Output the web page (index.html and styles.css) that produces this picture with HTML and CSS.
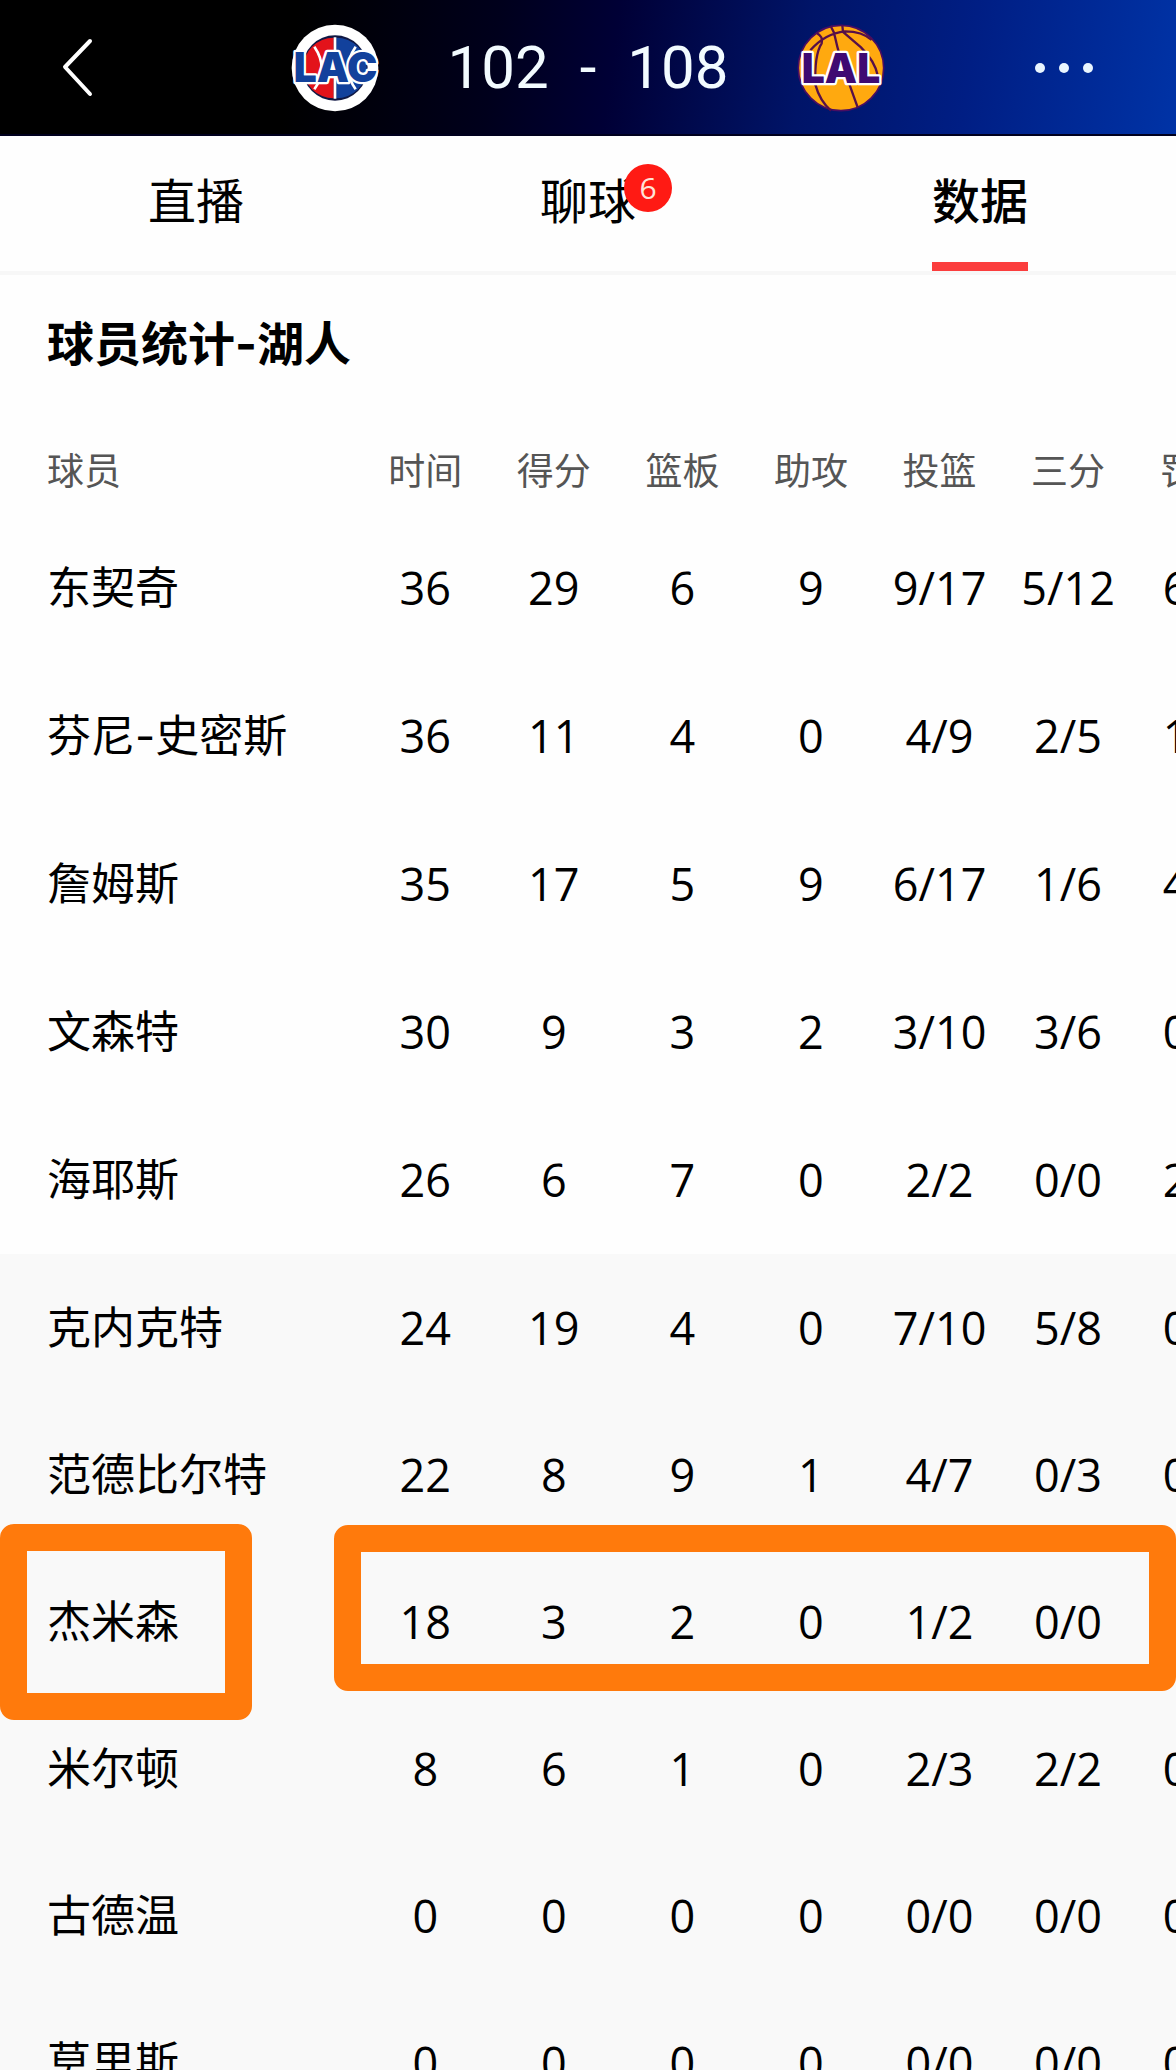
FILE: index.html
```html
<!DOCTYPE html>
<html lang="zh-CN">
<head>
<meta charset="utf-8">
<meta name="viewport" content="width=device-width, initial-scale=1">
<title>LAC 102 - 108 LAL</title>
<link rel="stylesheet" href="styles.css">
</head>
<body>
<div class="app">
  <header class="topbar">
    <button class="icon-button back" type="button" aria-label="返回">
      <svg width="32" height="60" viewBox="0 0 32 60" fill="none" stroke="#fff" stroke-width="4" stroke-linecap="round" stroke-linejoin="round"><path d="M28 3 3 29 28 56"/></svg>
    </button>
    <div class="matchup">
      <svg class="logo" viewBox="36 25 264 270" role="img" aria-label="LAC">
        <circle cx="165" cy="160" r="130" fill="#fff"/>
        <circle cx="165" cy="160" r="98" fill="#101844"/>
        <path d="M161 69a91 91 0 0 0 0 182z" fill="#e3131b"/>
        <path d="M169 69a91 91 0 0 1 0 182z" fill="#12419c"/>
        <path d="M165 68V252M103 96Q147 160 103 224M227 96Q183 160 227 224" fill="none" stroke="#fff" stroke-width="8"/>
        <text class="logo-text logo-clippers" x="167" y="203" text-anchor="middle">LAC</text>
      </svg>
      <div class="score"><span>102</span><span>-</span><span>108</span></div>
      <svg class="logo" viewBox="36 25 264 270" role="img" aria-label="LAL">
        <circle cx="168" cy="160" r="128" fill="#ffa90f" stroke="#4a0d62" stroke-width="5"/>
        <path d="M76 107Q120 56 180 50 232 50 260 76M96 56Q115 66 110 86 88 120 91 210M91 210Q105 260 138 288M137 34 147 54Q166 140 190 200L218 278M172 32 174 52 228 98Q270 140 278 182" fill="none" stroke="#571048" stroke-width="7"/>
        <text class="logo-text logo-lakers" x="168" y="204" text-anchor="middle">LAL</text>
      </svg>
    </div>
    <button class="icon-button more" type="button" aria-label="更多">
      <svg width="60" height="12" viewBox="0 0 60 12" fill="#eaf6ff"><circle cx="6" cy="6" r="5"/><circle cx="30" cy="6" r="5"/><circle cx="54" cy="6" r="5"/></svg>
    </button>
  </header>

  <nav class="tabs">
    <a class="tab" href="#live"><span class="tab-label">直播</span></a>
    <a class="tab" href="#chat"><span class="tab-label">聊球<span class="badge">6</span></span></a>
    <a class="tab active" href="#stats" aria-current="page"><span class="tab-label">数据</span></a>
  </nav>

  <main class="stats" id="stats">
    <h1 class="title">球员统计-湖人</h1>
    <table class="players">
      <colgroup><col class="name-col"><col span="7"></colgroup>
      <thead>
        <tr><th scope="col">球员</th><th scope="col">时间</th><th scope="col">得分</th><th scope="col">篮板</th><th scope="col">助攻</th><th scope="col">投篮</th><th scope="col">三分</th><th scope="col">罚球</th></tr>
      </thead>
      <tbody class="starters">
        <tr><th scope="row">东契奇</th><td>36</td><td>29</td><td>6</td><td>9</td><td>9/17</td><td>5/12</td><td>6/9</td></tr>
        <tr><th scope="row">芬尼-史密斯</th><td>36</td><td>11</td><td>4</td><td>0</td><td>4/9</td><td>2/5</td><td>1/2</td></tr>
        <tr><th scope="row">詹姆斯</th><td>35</td><td>17</td><td>5</td><td>9</td><td>6/17</td><td>1/6</td><td>4/4</td></tr>
        <tr><th scope="row">文森特</th><td>30</td><td>9</td><td>3</td><td>2</td><td>3/10</td><td>3/6</td><td>0/0</td></tr>
        <tr><th scope="row">海耶斯</th><td>26</td><td>6</td><td>7</td><td>0</td><td>2/2</td><td>0/0</td><td>2/2</td></tr>
      </tbody>
      <tbody class="bench">
        <tr><th scope="row">克内克特</th><td>24</td><td>19</td><td>4</td><td>0</td><td>7/10</td><td>5/8</td><td>0/0</td></tr>
        <tr><th scope="row">范德比尔特</th><td>22</td><td>8</td><td>9</td><td>1</td><td>4/7</td><td>0/3</td><td>0/0</td></tr>
        <tr class="marked"><th scope="row">杰米森<span class="frame frame-name"></span></th><td>18<span class="frame frame-stats"></span></td><td>3</td><td>2</td><td>0</td><td>1/2</td><td>0/0</td><td></td></tr>
        <tr><th scope="row">米尔顿</th><td>8</td><td>6</td><td>1</td><td>0</td><td>2/3</td><td>2/2</td><td>0/0</td></tr>
        <tr><th scope="row">古德温</th><td>0</td><td>0</td><td>0</td><td>0</td><td>0/0</td><td>0/0</td><td>0/0</td></tr>
        <tr><th scope="row">莫里斯</th><td>0</td><td>0</td><td>0</td><td>0</td><td>0/0</td><td>0/0</td><td>0/0</td></tr>
      </tbody>
    </table>
  </main>
</div>
</body>
</html>
```

FILE: styles.css
```css
:root {
  --cjk: Inter, "Noto Sans CJK SC", sans-serif;
  --digits: "Open Sans", "Noto Sans CJK SC", sans-serif;
  --overhang: 85px;
  --orange: #ff7a0c;
}

* {
  box-sizing: border-box;
}

body {
  margin: 0;
  background: #fefefe;
  color: #000;
  font-family: var(--cjk);
}

.app {
  display: flex;
  flex-direction: column;
  height: 100vh;
  overflow: hidden;
}

/* Score bar */
.topbar {
  flex: none;
  display: grid;
  grid-template-columns: 1fr auto 1fr;
  align-items: center;
  height: 136px;
  padding: 2px 82px 0 62px;
  background: linear-gradient(98deg, #000 25%, #00001c 42%, #000036 52%, #001468 68%, #001e84 82%, #0033a6 100%);
  border-bottom: 2px solid #00001e;
}

.icon-button {
  display: flex;
  padding: 0;
  border: 0;
  background: none;
}

.more {
  justify-self: end;
}

.matchup {
  display: flex;
  align-items: center;
  gap: 68px;
  margin-left: 20px;
}

.logo {
  width: 88px;
  height: 90px;
  overflow: visible;
}

.logo-text {
  font: 900 122px Inter, "Liberation Sans", sans-serif;
  stroke: #fff;
  stroke-width: 14px;
  stroke-linejoin: round;
  paint-order: stroke;
}

.logo-clippers {
  fill: #12419c;
}

.logo-lakers {
  fill: #3f0a72;
}

.score {
  display: flex;
  justify-content: space-between;
  width: 281px;
  color: #f2fbff;
  font: 400 60px/84px Roboto, sans-serif;
}

/* Tabs */
.tabs {
  flex: none;
  display: grid;
  grid-template-columns: repeat(3, 1fr);
  border-bottom: 4px solid #f7f7f7;
}

.tab {
  display: flex;
  justify-content: center;
  color: #000;
  font-size: 48px;
  line-height: 120px;
  text-decoration: none;
}

.tab-label {
  position: relative;
  padding-top: 6px;
  border-bottom: 9px solid transparent;
}

.active {
  font-weight: 500;
}

.active .tab-label {
  border-color: #fb3d3d;
}

.badge {
  position: absolute;
  top: 28px;
  left: 84px;
  width: 48px;
  height: 48px;
  border-radius: 50%;
  background: #ff1a14;
  color: #ffe3d8;
  font: 400 30px/48px var(--digits);
  text-align: center;
}

/* Player statistics */
.stats {
  flex: 1;
  min-height: 0;
  overflow: auto;
  scrollbar-width: none;
}

.title {
  margin: 0;
  padding: 33px 47px 50px;
  font-size: 47px;
  font-weight: 700;
  line-height: 72px;
}

.players {
  width: calc(100% + var(--overhang));
  table-layout: fixed;
  border-collapse: collapse;
}

.name-col {
  width: 361px;
}

.players th,
.players td {
  padding: 0;
  text-align: center;
  vertical-align: middle;
  white-space: nowrap;
  font-weight: 400;
}

.players th:first-child {
  padding-left: 47px;
  text-align: left;
}

.players thead th {
  height: 84px;
  color: #555;
  font-size: 37px;
  line-height: 56px;
}

.players tbody th {
  font-size: 44px;
  line-height: 64px;
}

.players td {
  font-family: var(--digits);
  font-size: 45px;
  line-height: 64px;
}

.starters tr {
  height: 148px;
}

.bench tr {
  height: 147px;
}

.bench {
  background: #f9f9f9;
}

.marked {
  position: relative;
}

.frame {
  position: absolute;
  border: 27px solid var(--orange);
  border-radius: 14px;
}

.frame-name {
  top: -24px;
  bottom: -25px;
  left: 0;
  width: 252px;
}

.frame-stats {
  top: -23px;
  right: var(--overhang);
  bottom: 4px;
  left: 334px;
}
```
